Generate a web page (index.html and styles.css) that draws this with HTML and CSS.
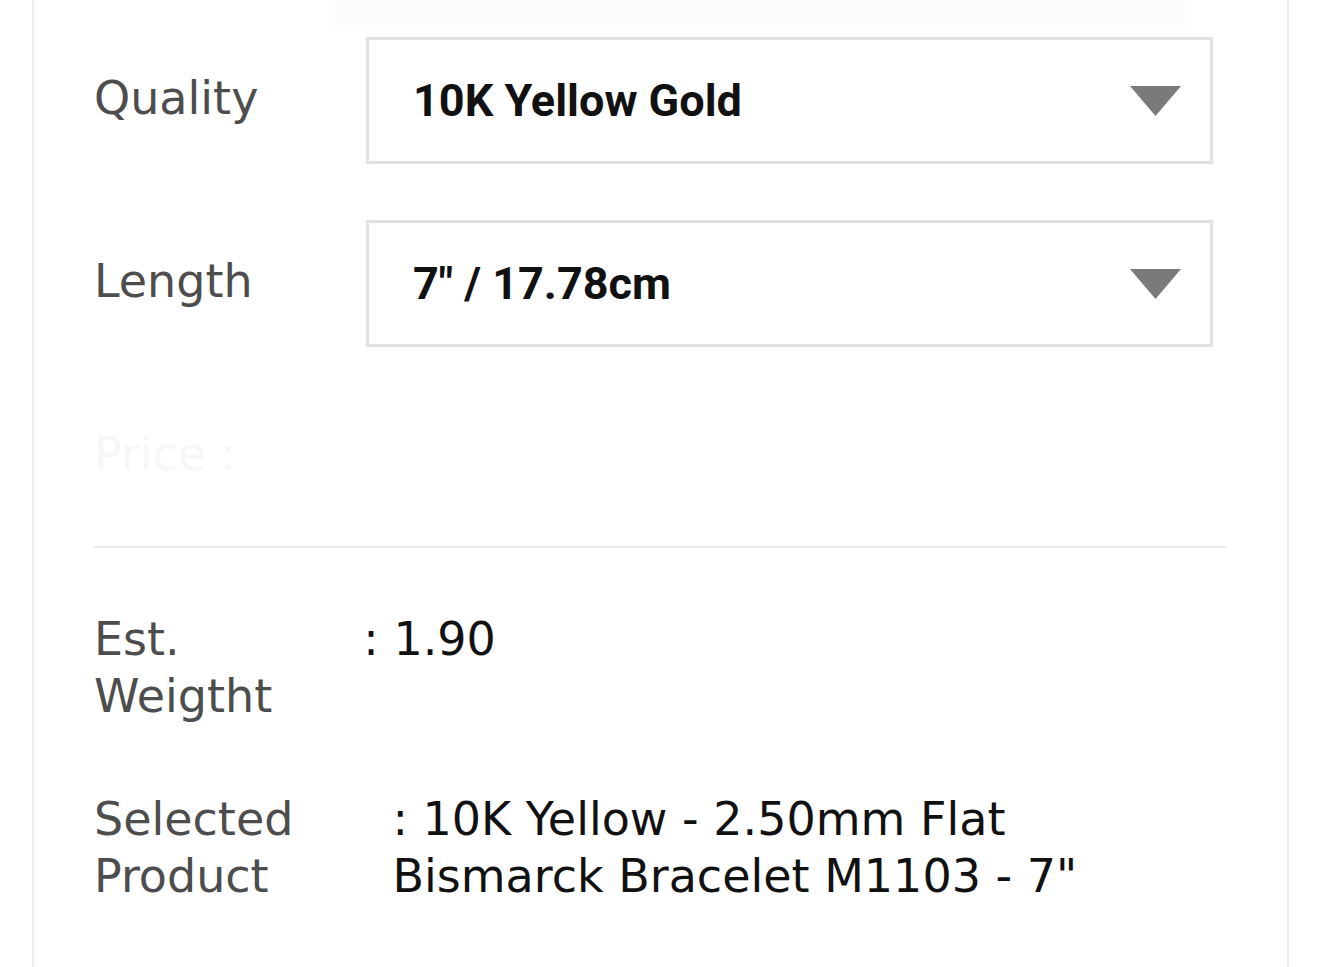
FILE: index.html
```html
<!DOCTYPE html>
<html lang="en">
<head>
  <meta charset="UTF-8">
  <title>Product Options</title>
  <link rel="stylesheet" href="styles.css">
</head>
<body>

<div class="card">
  <div class="ghost"></div>

  <div class="field">
    <div class="field-label">Quality</div>
    <div class="select">
      <span>10K Yellow Gold</span>
      <svg class="caret" width="51" height="30" viewBox="0 0 51 30"><path d="M0 0H51L25.5 30Z" fill="#7a7a7a"/></svg>
    </div>
  </div>

  <div class="field">
    <div class="field-label">Length</div>
    <div class="select">
      <span>7" / 17.78cm</span>
      <svg class="caret" width="51" height="30" viewBox="0 0 51 30"><path d="M0 0H51L25.5 30Z" fill="#7a7a7a"/></svg>
    </div>
  </div>

  <div class="price">Price :</div>

  <hr class="divider">

  <div class="spec">
    <div class="spec-label">Est.<br>Weigtht</div>
    <div class="spec-value">: 1.90</div>
  </div>

  <div class="spec">
    <div class="spec-label">Selected<br>Product</div>
    <div class="spec-value spec-value-wide">: 10K Yellow - 2.50mm Flat<br>Bismarck Bracelet M1103 - 7"</div>
  </div>
</div>

</body>
</html>
```

FILE: styles.css
```css
body {
  margin: 0;
  background-color: #fff;
  font-family: "DejaVu Sans", sans-serif;
}
.card {
  margin: 0 31px 0 32px;
  border-left: 2px solid #eeeeee;
  border-right: 2px solid #eeeeee;
  padding: 0 61px 0 60px;
  min-height: 967px;
  box-sizing: border-box;
}
.ghost {
  height: 30px;
  margin: 0 40px 7px 240px;
  background-color: #fcfcfc;
  filter: blur(3px);
}
.field {
  display: flex;
  align-items: center;
  margin-bottom: 56px;
}
.field-label {
  width: 272px;
  margin-bottom: 6px;
  font-size: 46px;
  color: #4d4d4d;
}
.select {
  width: 847px;
  height: 127px;
  box-sizing: border-box;
  border: 3px solid #e2e2e2;
  display: flex;
  align-items: center;
  justify-content: space-between;
  padding: 0 29px 0 44px;
  font-family: Roboto, sans-serif;
  font-weight: bold;
  font-size: 45px;
  color: #111;
}
.price {
  margin-top: 79px;
  font-size: 46px;
  line-height: 57px;
  color: #f7f7f7;
}
.divider {
  border: 0;
  border-top: 2px solid #ebebeb;
  margin: 63px 0 63px;
}
.spec {
  display: flex;
  gap: 91px;
  font-size: 46px;
  line-height: 57px;
  margin-bottom: 66px;
}
.spec-label {
  color: #4d4d4d;
}
.spec-value {
  color: #111;
}
.spec-value-wide {
  padding-left: 8px;
}
```
